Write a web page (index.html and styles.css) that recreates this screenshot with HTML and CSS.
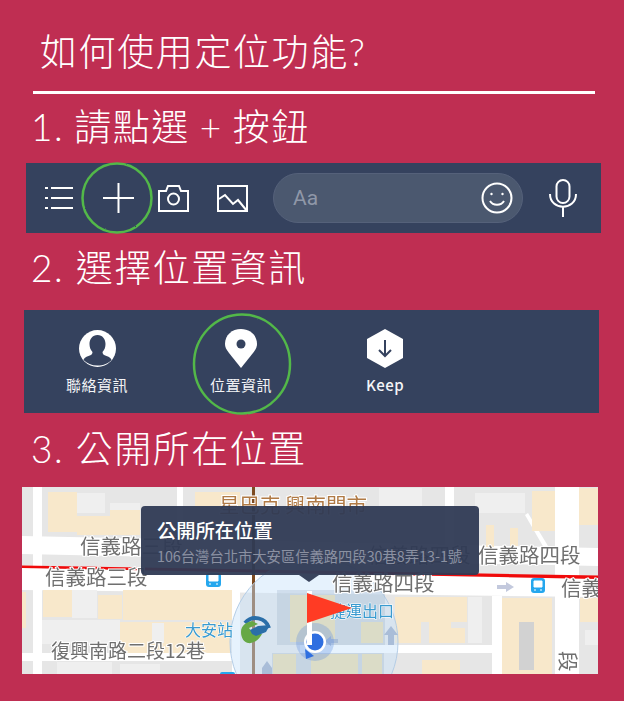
FILE: index.html
```html
<!DOCTYPE html>
<html lang="zh-Hant">
<head>
<meta charset="utf-8">
<title>如何使用定位功能?</title>
<link rel="stylesheet" href="styles.css">
</head>
<body>
<svg class="defs" aria-hidden="true"><filter id="chalk" x="-5%" y="-5%" width="110%" height="110%"><feTurbulence type="fractalNoise" baseFrequency="0.9" numOctaves="2" seed="4"/><feDisplacementMap in="SourceGraphic" scale="1.600"/></filter></svg>
<main class="page">
  <h1 class="title">如何使用定位功能?</h1>
  <hr class="rule">

  <h2 class="step step-one">1. 請點選 + 按鈕</h2>
  <section class="toolbar">
    <svg class="icon menu" viewBox="0 0 28 22"><path d="M0 1h3M0 11h3M0 21h3M6 1h22M6 11h22M6 21h22"/></svg>
    <svg class="icon plus" viewBox="0 0 31 30"><path d="M0 15h31M15.500 0v30"/></svg>
    <svg class="icon camera" viewBox="0 0 31 27"><path d="M1 6h7l2-5h11l2 5h7v20H1z"/><circle cx="15.500" cy="14" r="5.500"/></svg>
    <svg class="icon picture" viewBox="0 0 31 27"><path d="M1 1h29v25H1zM2 14l6-4 8 9 5-4 9 11"/></svg>
    <div class="input">
      <span class="placeholder">Aa</span>
      <svg class="icon smile" viewBox="0 0 32 32"><circle cx="16" cy="16" r="14.500"/><path d="M9 19c3 5 11 5 14 0"/><circle class="dot" cx="10.500" cy="12" r="1.200"/><circle class="dot" cx="21.500" cy="12" r="1.200"/></svg>
    </div>
    <svg class="icon mic" viewBox="0 0 28 38"><rect x="7.500" y="1" width="13" height="23" rx="6.500"/><path d="M1 15c0 17 26 17 26 0M14 28v10"/></svg>
    <svg class="ring ring-plus" viewBox="0 0 72 72"><ellipse cx="36" cy="36" rx="34.500" ry="34.500"/></svg>
  </section>

  <h2 class="step step-two">2. 選擇位置資訊</h2>
  <section class="panel">
    <div class="option">
      <svg class="option-icon" viewBox="0 0 37 39"><circle class="fill" cx="18.500" cy="19.500" r="18.500"/><path class="cut" d="M18.500 6c5 0 8 4 8 9 0 3-1 6-3 8 0 2 1 3 4 4 3 1 4.500 2 5 4-3 3.500-8 5.500-14 5.500S8 34.500 4.500 31c.5-2 2-3 5-4 3-1 4-2 4-4-2-2-3-5-3-8 0-5 3-9 8-9z"/></svg>
      <span class="option-label">聯絡資訊</span>
    </div>
    <div class="option">
      <svg class="option-icon" viewBox="0 0 32 39"><path class="fill" d="M16 39 4 24C1 20 0 18 0 15 0 6 7 0 16 0s16 6 16 15c0 3-1 5-4 9z"/><circle class="cut" cx="16" cy="15" r="4.500"/></svg>
      <span class="option-label">位置資訊</span>
    </div>
    <div class="option">
      <svg class="option-icon" viewBox="0 0 36 39"><path class="fill" d="M18 0l18 10v19L18 39 0 29V10z"/><path class="arrow" d="M18 11v16M12 21l6 6 6-6"/></svg>
      <span class="option-label option-latin">Keep</span>
    </div>
    <svg class="ring ring-place" viewBox="0 0 100 103"><ellipse cx="50" cy="51" rx="48" ry="49.500"/></svg>
  </section>

  <h2 class="step step-three">3. 公開所在位置</h2>
  <section class="map">
    <svg class="map-art" viewBox="22 487 576 187">
      <rect class="m-block" x="22" y="487" width="576" height="187"/>
      <g class="m-road">
        <polygon points="22,536 598,548 598,566 22,554"/>
        <polygon points="22,568 598,579 598,597 22,590"/>
        <rect x="33" y="487" width="9" height="187"/>
        <rect x="177" y="487" width="6" height="50"/>
        <rect x="445" y="487" width="9" height="62"/>
        <rect x="555" y="487" width="24" height="90"/>
        <rect x="555" y="596" width="24" height="78"/>
        <rect x="492" y="596" width="10" height="78"/>
        <rect x="22" y="653" width="215" height="8"/>
        <rect x="300" y="645" width="195" height="8"/>
        <rect x="232" y="590" width="8" height="84"/>
        <polygon points="525,515 528,513 548,546 544,548"/>
      </g>
      <g class="m-light">
        <rect x="77" y="493" width="28" height="20"/>
        <rect x="110" y="503" width="30" height="10"/>
        <rect x="72" y="590" width="25" height="28"/>
        <rect x="42" y="620" width="78" height="24"/>
        <rect x="130" y="624" width="12" height="20"/>
        <rect x="379" y="488" width="43" height="18"/>
        <rect x="475" y="493" width="50" height="20"/>
        <rect x="468" y="597" width="14" height="46"/>
        <rect x="57" y="662" width="55" height="12"/>
        <rect x="120" y="664" width="40" height="10"/>
        <rect x="585" y="630" width="13" height="15"/>
      </g>
      <g class="m-tan">
        <rect x="48" y="492" width="29" height="40"/>
        <rect x="77" y="516" width="35" height="19"/>
        <rect x="110" y="510" width="30" height="25"/>
        <rect x="195" y="492" width="45" height="14"/>
        <rect x="43" y="590" width="29" height="27"/>
        <rect x="98" y="595" width="24" height="24"/>
        <rect x="123" y="590" width="109" height="30"/>
        <rect x="120" y="622" width="110" height="31"/>
        <rect x="22" y="592" width="4" height="36"/>
        <rect x="532" y="491" width="23" height="40"/>
        <rect x="579" y="488" width="19" height="37"/>
        <rect x="486" y="525" width="8" height="22"/>
        <rect x="510" y="528" width="8" height="18"/>
        <rect x="395" y="597" width="72" height="25"/>
        <rect x="395" y="622" width="26" height="21"/>
        <rect x="429" y="622" width="22" height="21"/>
        <rect x="450" y="628" width="15" height="15"/>
        <rect x="502" y="598" width="50" height="76"/>
        <rect x="580" y="598" width="18" height="24"/>
        <rect x="422" y="660" width="38" height="14"/>
      </g>
      <rect class="m-grey" x="519" y="622" width="15" height="48"/>
      <rect class="m-light" x="152" y="623" width="12" height="20"/>
      <polygon class="m-red" points="22,565.500 598,575.500 598,579 22,568"/>
      <rect class="m-brown" x="252" y="487" width="3" height="187"/>

      <circle class="m-zone" cx="314" cy="642" r="84"/>
      <rect class="m-inner" x="277" y="590" width="108" height="55"/>
      <rect class="m-inner" x="272" y="653" width="112" height="21"/>
      <g class="m-innertan">
        <rect x="290" y="595" width="45" height="47"/>
        <rect x="361" y="622" width="22" height="21"/>
        <rect x="311" y="654" width="47" height="20"/>
        <rect x="362" y="654" width="20" height="20"/>
        <rect x="273" y="654" width="23" height="20"/>
      </g>

      <text class="m-label m-shop" x="219" y="513">星巴克 興南門市</text>
      <text class="m-label" x="80" y="554">信義路三段</text>
      <text class="m-label" x="45" y="585">信義路三段</text>
      <text class="m-label" x="368" y="563">信義路四段</text>
      <text class="m-label" x="332" y="591">信義路四段</text>
      <text class="m-label" x="478" y="563">信義路四段</text>
      <text class="m-label" x="561" y="596">信義</text>
      <text class="m-label m-small" x="51" y="658">復興南路二段12巷</text>
      <text class="m-label m-side" transform="translate(560 651) rotate(90)">段</text>
      <text class="m-blue" x="185" y="636">大安站</text>
      <text class="m-blue" x="330" y="617">捷運出口</text>

      <g class="m-bus">
        <rect x="206" y="573" width="15" height="14" rx="3"/>
        <rect x="531" y="578" width="14" height="15" rx="3"/>
        <rect x="220" y="672" width="15" height="6" rx="2"/>
      </g>
      <g class="m-busface">
        <path d="M209 575h9v6h-9zM209 584h2M216 584h2"/>
        <path d="M534 581h8v6h-8zM534 590h2M540 590h2"/>
      </g>
      <path class="m-arrow" d="M497 585h9v-3l8 5-8 5v-3h-9z"/>
      <path class="m-arrow m-arrow-soft" d="M388 645v-10h-4l7-9 7 9h-4v10zM338 643h-7v3l-6-5 6-5v3h7z"/>
      <path class="m-arrow m-arrow-soft" d="M262 674v-6l5-7 5 7v6z"/>

      <path class="m-logo-arc" d="M245 623A14 14 0 0 1 269 628"/>
      <path class="m-logo-green" d="M241 632C241 625 247 622 252 621L258 624 249 628 252 632 262 634C259 640 253 644 248 643 244 642 241 638 241 632Z"/>
      <path class="m-logo-blue" d="M250 630L258 626 270 625 266 632 256 636 252 634Z"/>

      <circle class="m-halo" cx="315" cy="642" r="19"/>
      <circle class="m-dotring" cx="315" cy="642" r="11"/>
      <circle class="m-dot" cx="315" cy="642" r="8.500"/>
      <polygon class="m-dot" points="305,649 314,656 306,659"/>
      <rect class="m-pole" x="307" y="591" width="5" height="54"/>
      <polygon class="m-flag" points="307,593 352,608 307,623"/>
    </svg>
    <div class="popup">
      <strong class="popup-title">公開所在位置</strong>
      <span class="popup-address">106台灣台北市大安區信義路四段30巷8弄13-1號</span>
    </div>
  </section>
</main>
</body>
</html>
```

FILE: styles.css
```css
* { box-sizing: border-box; }

html, body { margin: 0; padding: 0; }

body {
  width: 624px;
  height: 701px;
  overflow: hidden;
  background: #bf2e52;
  color: #fff;
  font-family: "Lato", "Noto Sans CJK TC", sans-serif;
}

.defs { display: block; width: 0; height: 0; }

.page {
  display: flex;
  flex-direction: column;
  padding-top: 27px;
}

.title {
  margin: 0 0 0 40px;
  height: 64px;
  line-height: 50px;
  font-size: 37px;
  font-weight: 300;
  letter-spacing: 1.600px;
}

.rule {
  width: 562px;
  height: 3px;
  margin: 0 0 0 33px;
  border: 0;
  background: #fff;
}

.step {
  height: 50px;
  margin-left: 31px;
  margin-right: 0;
  line-height: 50px;
  font-size: 37px;
  font-weight: 300;
  letter-spacing: 1.500px;
  white-space: pre;
}

.step-one { margin-top: 8px; margin-bottom: 11px; word-spacing: -1.500px; }
.step-two { margin-top: 10px; margin-bottom: 17px; }
.step-three { margin-top: 11px; margin-bottom: 13px; }

.toolbar {
  position: relative;
  display: flex;
  align-items: center;
  width: 575px;
  height: 70px;
  margin-left: 26px;
  padding-left: 19px;
  background: #35425e;
}

.icon {
  display: block;
  flex: none;
  fill: none;
  stroke: #fff;
  stroke-width: 2;
}

.menu { width: 28px; height: 22px; margin-top: -1px; }
.plus { width: 31px; height: 30px; margin-left: 30px; margin-top: -1px; }
.camera { width: 31px; height: 27px; margin-left: 24px; }
.picture { width: 31px; height: 27px; margin-left: 28px; }

.input {
  display: flex;
  flex: none;
  align-items: center;
  justify-content: space-between;
  width: 250px;
  height: 50px;
  margin-left: 25px;
  padding: 0 9px 0 19px;
  border: 1px solid #55617a;
  border-radius: 25px;
  background: #4b586f;
}

.placeholder {
  color: #8f97a8;
  font-family: "Roboto", sans-serif;
  font-size: 21px;
  font-weight: 400;
}

.smile { width: 32px; height: 32px; }
.smile .dot { fill: #fff; stroke: none; }

.mic { width: 28px; height: 38px; margin-left: 26px; }

.ring {
  position: absolute;
  overflow: visible;
  fill: none;
  stroke: #52b848;
  stroke-width: 2.500;
  filter: url(#chalk);
}

.ring-plus { left: 55px; top: -1px; width: 72px; height: 72px; }
.ring-place { left: 168px; top: 3px; width: 100px; height: 103px; }

.panel {
  position: relative;
  display: flex;
  align-items: flex-start;
  width: 575px;
  height: 103px;
  margin-left: 24px;
  padding: 19px 0 0 1px;
  background: #35425e;
}

.option {
  display: flex;
  flex-direction: column;
  align-items: center;
  gap: 7px;
  width: 144px;
}

.option-icon { display: block; height: 39px; }
.option-icon .fill { fill: #fff; }
.option-icon .cut { fill: #35425e; }
.option-icon .arrow { fill: none; stroke: #35425e; stroke-width: 2; }

.option-label {
  font-family: "Noto Sans CJK TC", sans-serif;
  font-size: 15px;
  line-height: 20px;
  font-weight: 400;
  letter-spacing: 0.500px;
  color: #f4f5f7;
}

.option-latin { font-weight: 500; }

.map {
  position: relative;
  width: 576px;
  height: 187px;
  margin-left: 22px;
  overflow: hidden;
}

.map-art {
  display: block;
  width: 576px;
  height: 187px;
  filter: blur(0.4px);
  font-family: "Noto Sans CJK TC", sans-serif;
}

.m-block { fill: #e6e6e6; }
.m-road { fill: #fff; }
.m-light { fill: #efefef; }
.m-tan { fill: #f8e8cb; }
.m-grey { fill: #d2d2d2; }
.m-red { fill: #f00a0a; }
.m-brown { fill: #7d4a20; }
.m-zone { fill: rgba(200, 226, 250, 0.45); stroke: #b4cde6; stroke-width: 1; }
.m-inner { fill: rgba(165, 185, 205, 0.35); }
.m-innertan { fill: rgba(225, 222, 190, 0.75); }

.m-label {
  fill: #6f6f6f;
  stroke: #fff;
  stroke-width: 2px;
  paint-order: stroke;
  font-size: 20.500px;
}

.m-small { font-size: 19px; }
.m-shop { fill: #b07a45; }

.m-blue {
  fill: #3a9bd0;
  stroke: #fff;
  stroke-width: 1px;
  paint-order: stroke;
  font-size: 16px;
}

.m-bus { fill: #25a7ee; }
.m-busface { fill: #fff; stroke: #fff; stroke-width: 1; }
.m-arrow { fill: #c3c9dd; }
.m-arrow-soft { fill: #a9bdd8; }
.m-logo-arc { fill: none; stroke: #2a6ea8; stroke-width: 4; }
.m-logo-blue { fill: #2a6ea8; }
.m-logo-green { fill: #66a845; }
.m-halo { fill: rgba(90, 140, 225, 0.3); }
.m-dotring { fill: #fff; }
.m-dot { fill: #2f6fe0; }
.m-pole { fill: #fff; }
.m-flag { fill: #ff3b24; }

.popup {
  position: absolute;
  left: 119px;
  top: 19px;
  display: flex;
  flex-direction: column;
  width: 338px;
  height: 69px;
  padding: 11px 16px 0;
  border-radius: 4px;
  background: rgba(47, 58, 84, 0.95);
}

.popup::after {
  content: "";
  position: absolute;
  left: 158px;
  top: 69px;
  border-style: solid;
  border-width: 7px 10px 0;
  border-color: rgba(47, 58, 84, 0.95) transparent transparent;
}

.popup-title {
  font-family: "Noto Sans CJK TC", sans-serif;
  font-size: 19.300px;
  line-height: 26px;
  font-weight: 500;
  color: #fff;
}

.popup-address {
  margin-top: 3px;
  font-family: "Noto Sans CJK TC", sans-serif;
  font-size: 14.300px;
  line-height: 20px;
  white-space: nowrap;
  color: #8b91a2;
}
```
